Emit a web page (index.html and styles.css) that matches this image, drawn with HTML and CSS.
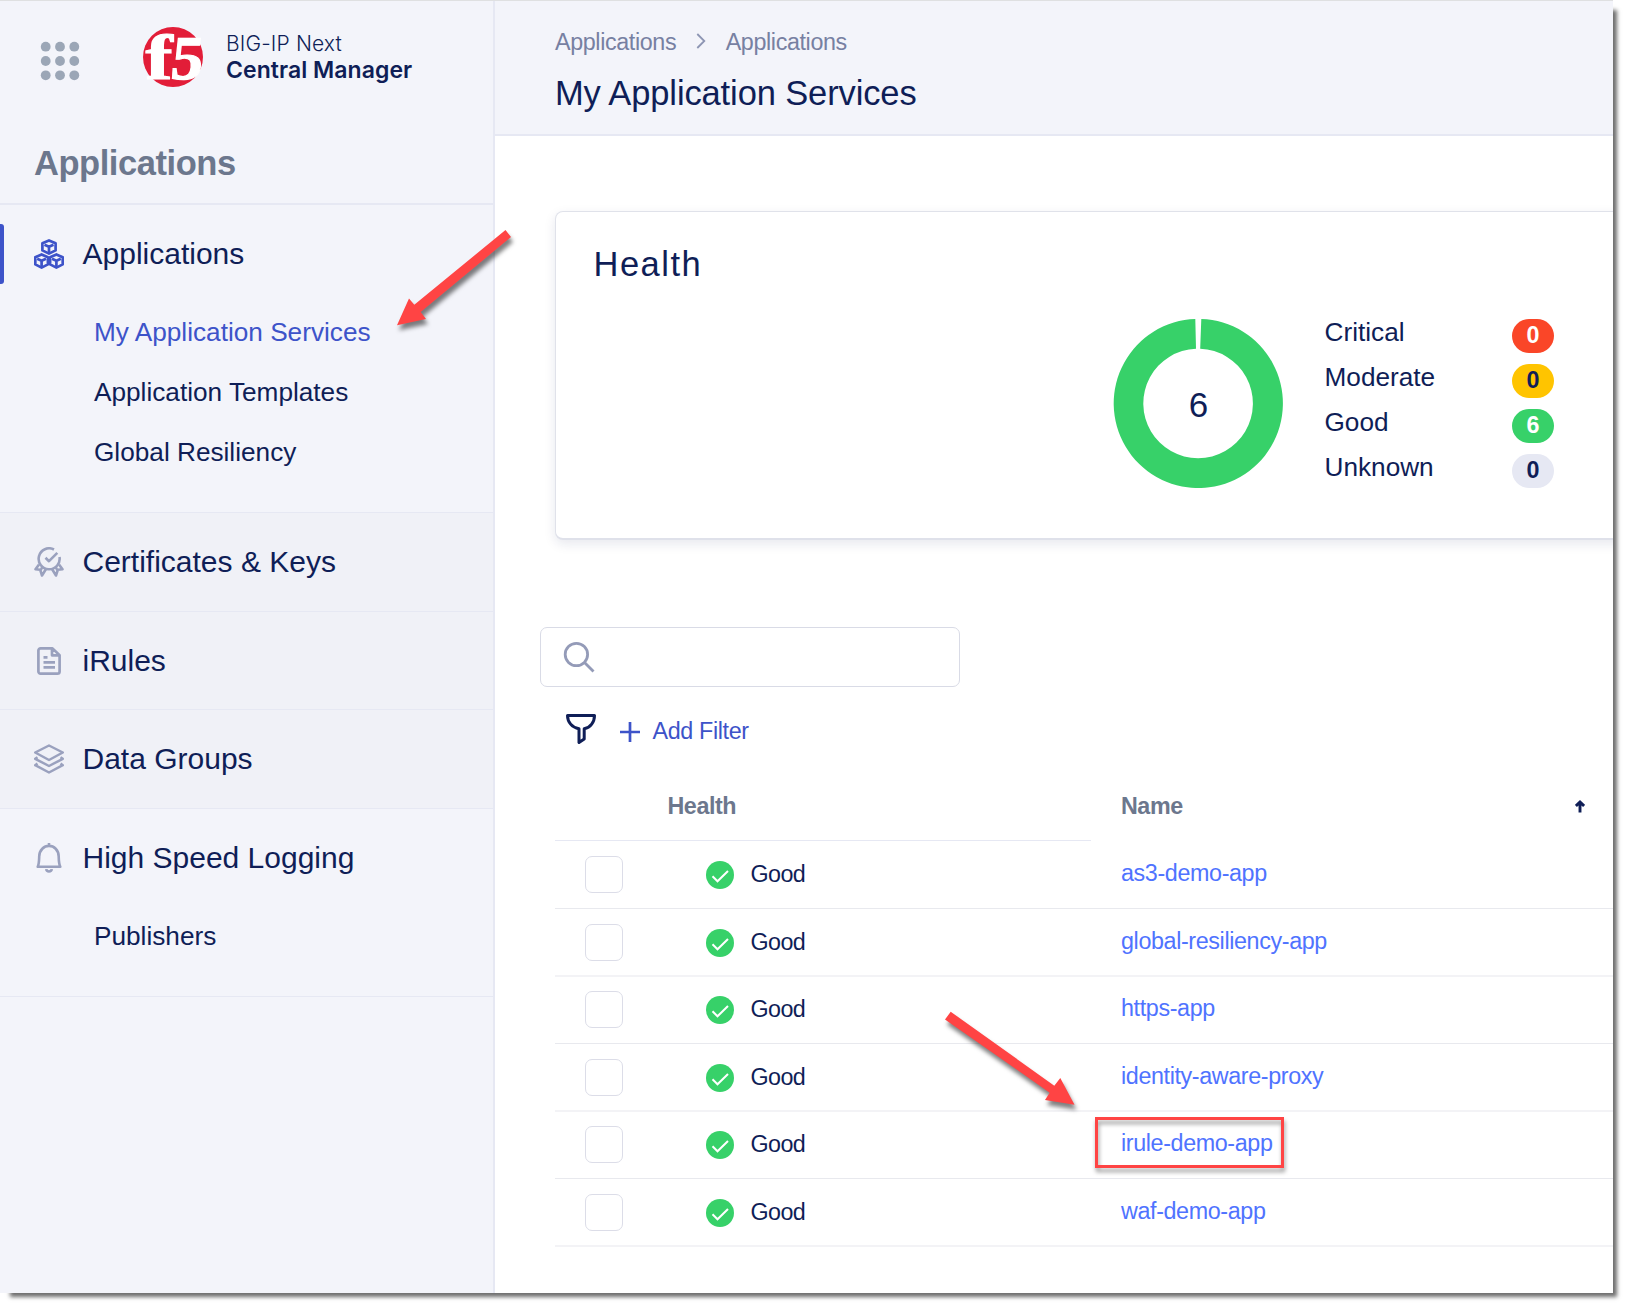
FILE: index.html
```html
<!DOCTYPE html>
<html lang="en">
<head>
<meta charset="utf-8">
<title>BIG-IP Next Central Manager</title>
<link rel="stylesheet" href="styles.css">
</head>
<body>
<div class="window">
  <aside class="sidebar">
    <div class="brand">
      <svg class="brand-dots" width="40" height="40" viewBox="0 0 40 40" fill="#9ba6b6"><circle cx="5.7" cy="5.7" r="4.9"/><circle cx="20" cy="5.7" r="4.9"/><circle cx="34.3" cy="5.7" r="4.9"/><circle cx="5.7" cy="20" r="4.9"/><circle cx="20" cy="20" r="4.9"/><circle cx="34.3" cy="20" r="4.9"/><circle cx="5.7" cy="34.3" r="4.9"/><circle cx="20" cy="34.3" r="4.9"/><circle cx="34.3" cy="34.3" r="4.9"/></svg>
      <svg class="brand-logo" width="60" height="60" viewBox="0 0 60 60">
        <circle cx="30" cy="30" r="30" fill="#e21d38"/>
        <g class="logo-letters">
          <text transform="translate(2.500 51.5) scale(1.300 1)" font-size="62.500">f</text>
          <text transform="translate(26.500 51.5) skewX(-6) scale(1.030 1)" font-size="62">5</text>
        </g>
      </svg>
      <div class="brand-name"><span class="brand-line">BIG-IP Next</span><span class="brand-line brand-strong">Central Manager</span></div>
    </div>
    <h2 class="sidebar-title">Applications</h2>
    <nav class="nav">
      <section class="nav-group open">
        <div class="nav-item active">
          <svg class="nav-icon" viewBox="0 0 30 30" stroke-width="2.7">
            <path d="M15 1.4l6.600 2.800v7.200L15 14.600l-6.600-3.200V4.200z"/><path d="M10.500 5.800L15 7.800l4.500-2M15 8v5"/>
            <path d="M7.600 15.400l6.300 2.800v7.200l-6.300 3.200-6.300-3.200v-7.200z"/><path d="M3.200 19.800l4.400 2 4.400-2M7.600 22v5"/>
            <path d="M22.400 15.400l6.300 2.800v7.200l-6.300 3.200-6.300-3.200v-7.200z"/><path d="M18 19.800l4.400 2 4.400-2M22.400 22v5"/>
          </svg>
          <span>Applications</span>
        </div>
        <ul class="nav-children">
          <li class="current">My Application Services</li>
          <li>Application Templates</li>
          <li>Global Resiliency</li>
        </ul>
      </section>
      <section class="nav-group">
        <div class="nav-item">
          <svg class="nav-icon" viewBox="0 0 30 30" stroke-width="2.6"><path d="M20 2.500A10.500 10.500 0 1 0 25.500 10"/><path d="M11.500 10.800l3.500 3.400 8.300-8.400"/><path d="M5 17.500L1.500 22.300l4.700.5L8 28.500l4-6.500M25 17.500l3.500 4.800-4.700.5L22 28.500 18 22M8.300 20l-1.500 3M21.700 20l1.500 3"/></svg>
          <span>Certificates &amp; Keys</span>
        </div>
      </section>
      <section class="nav-group short">
        <div class="nav-item">
          <svg class="nav-icon" viewBox="0 0 30 30" stroke-width="2.7"><path d="M18.500 2.400H6.600a2.200 2.200 0 0 0-2.200 2.200v20.800a2.200 2.200 0 0 0 2.200 2.200h16.800a2.200 2.200 0 0 0 2.200-2.200V9.200zM18 2.700v6.600h7.400M9.500 11.300h4M9.500 16.400h11.500M9.500 21.400h11.500"/></svg>
          <span>iRules</span>
        </div>
      </section>
      <section class="nav-group">
        <div class="nav-item">
          <svg class="nav-icon" viewBox="0 0 30 30" stroke-width="2.500"><path d="M15 1.500L28.800 8.500 15 16 1.200 8.500z"/><path d="M3.500 13.300L1.200 14.800 15 22l13.800-7.200-2.300-1.500M3.500 19.600L1.200 21.200 15 28.500l13.800-7.300-2.300-1.600"/></svg>
          <span>Data Groups</span>
        </div>
      </section>
      <section class="nav-group open">
        <div class="nav-item">
          <svg class="nav-icon" viewBox="0 0 30 30" stroke-width="2.600"><path d="M15 0v2.500M3.700 23.800h22.600c-1.500-3-1.500-6.300-1.600-10.300C24.600 7 20 2.900 15 2.900S5.400 7 5.200 13.500C5.100 17.500 5.100 20.800 3.700 23.800z"/><path d="M12.200 26.200c.4 3 5.200 3 5.600 0"/></svg>
          <span>High Speed Logging</span>
        </div>
        <ul class="nav-children"><li>Publishers</li></ul>
      </section>
    </nav>
  </aside>

  <main class="main">
    <header class="page-head">
      <div class="crumbs">
        <span>Applications</span>
        <svg width="10" height="16" viewBox="0 0 10 16" fill="none" stroke="#8d95b3" stroke-width="1.8"><path d="M1.300 1l7 7-7 7"/></svg>
        <span>Applications</span>
      </div>
      <h1 class="page-title">My Application Services</h1>
    </header>

    <section class="card">
      <h2 class="card-title">Health</h2>
      <div class="card-body">
        <div class="donut">
          <svg width="170" height="170" viewBox="0 0 170 170"><path fill="#37d169" d="M88.300 .9A84.600 84.600 0 1 1 82.300 .9L83 30.700A54.800 54.800 0 1 0 87.200 30.700z"/></svg>
          <span class="donut-total">6</span>
        </div>
        <ul class="legend">
          <li><span>Critical</span><b class="pill critical">0</b></li>
          <li><span>Moderate</span><b class="pill moderate">0</b></li>
          <li><span>Good</span><b class="pill good">6</b></li>
          <li><span>Unknown</span><b class="pill unknown">0</b></li>
        </ul>
      </div>
    </section>

    <div class="search">
      <svg width="32" height="32" viewBox="0 0 32 32" fill="none" stroke="#949bb8" stroke-width="2.800"><circle cx="13.400" cy="13.500" r="11.200"/><path d="M21.500 21.500l9 9"/></svg>
    </div>
    <div class="filters">
      <svg width="30" height="30" viewBox="0 0 30 30" fill="none" stroke="#0f1e57" stroke-width="3" stroke-linejoin="round"><path d="M1.500 1.500h27C28.500 8 24.500 13.500 18.200 14.800V25l-5.200 3.500V14.800C6 13.500 1.500 8 1.500 1.500z"/></svg>
      <svg class="plus" width="20" height="20" viewBox="0 0 20 20" stroke="#3d53c9" stroke-width="2.700"><path d="M0 10h20M10 0v20"/></svg>
      <span class="add-filter">Add Filter</span>
    </div>

    <div class="table">
      <div class="thead">
        <div class="th th-health">Health</div>
        <div class="th th-name"><span>Name</span>
          <svg width="10" height="13" viewBox="0 0 10 13" fill="none" stroke="#0f1e57" stroke-width="2.900"><path d="M5 12.500V2M.9 6L5 2.100 9.100 6"/></svg>
        </div>
      </div>
      <div class="row r1"><i class="box"></i><svg class="ok" viewBox="0 0 28 28"><circle cx="14" cy="14" r="14"/><path d="M6.500 15.300l5 5L22 10"/></svg><span class="state">Good</span><a class="name">as3-demo-app</a></div>
      <div class="row r2"><i class="box"></i><svg class="ok" viewBox="0 0 28 28"><circle cx="14" cy="14" r="14"/><path d="M6.500 15.300l5 5L22 10"/></svg><span class="state">Good</span><a class="name">global-resiliency-app</a></div>
      <div class="row r3"><i class="box"></i><svg class="ok" viewBox="0 0 28 28"><circle cx="14" cy="14" r="14"/><path d="M6.500 15.300l5 5L22 10"/></svg><span class="state">Good</span><a class="name">https-app</a></div>
      <div class="row r2"><i class="box"></i><svg class="ok" viewBox="0 0 28 28"><circle cx="14" cy="14" r="14"/><path d="M6.500 15.300l5 5L22 10"/></svg><span class="state">Good</span><a class="name">identity-aware-proxy</a></div>
      <div class="row r3"><i class="box"></i><svg class="ok" viewBox="0 0 28 28"><circle cx="14" cy="14" r="14"/><path d="M6.500 15.300l5 5L22 10"/></svg><span class="state">Good</span><a class="name">irule-demo-app</a></div>
      <div class="row r2"><i class="box"></i><svg class="ok" viewBox="0 0 28 28"><circle cx="14" cy="14" r="14"/><path d="M6.500 15.300l5 5L22 10"/></svg><span class="state">Good</span><a class="name">waf-demo-app</a></div>
    </div>
  </main>

  <!-- callouts drawn over the page -->
  <svg class="callouts" width="1613" height="1293" viewBox="0 0 1613 1293">
    <path d="M505.500 230L511 237 420.700 312 426 319 397 325.300 409 298.500 414.300 304.700z"/>
    <path d="M950.700 1011.700L945 1019.400 1049.700 1092.700 1045 1100 1074.500 1104.700 1060.300 1078 1054.300 1085.700z"/>
  </svg>
  <div class="marker"></div>
</div>
</body>
</html>
```
FILE: styles.css
```css
* { box-sizing: border-box; }
body {
  margin: 0;
  width: 1628px;
  height: 1308px;
  overflow: hidden;
  background: #fff;
  color: #0f1e57;
  font-family: "Liberation Sans", Arial, sans-serif;
}
h1, h2, ul { margin: 0; padding: 0; font-weight: 400; }
ul { list-style: none; }

.window {
  position: relative;
  display: flex;
  width: 1613px;
  height: 1293px;
  border-top: 1px solid #dfe0e1;
  background: #fff;
  box-shadow: 7px 7px 4px -3px rgba(0, 0, 0, .57);
}

/* sidebar */
.sidebar {
  flex: none;
  width: 495px;
  border-right: 2px solid #e6e8f3;
  background: #f3f4fa;
}
.brand { display: flex; height: 124px; padding: 26px 0 0 40px; }
.brand-dots { flex: none; margin-top: 14px; }
.brand-logo { flex: none; margin-left: 63px; overflow: visible; }
.logo-letters {
  fill: #fff;
  stroke: #fff;
  stroke-width: 1.2px;
  font-family: "Liberation Serif", serif;
  font-weight: 700;
}
.brand-name {
  display: flex;
  flex-direction: column;
  margin: 4px 0 0 23px;
  font-family: Inter, sans-serif;
}
.brand-line { height: 26px; line-height: 26px; font-size: 21px; font-weight: 350; letter-spacing: .15px; white-space: nowrap; }
.brand-strong { font-size: 23px; font-weight: 600; letter-spacing: .05px; }
.sidebar-title {
  height: 80px;
  padding-left: 34px;
  border-bottom: 2px solid #e6e8f3;
  color: #6c778d;
  font-size: 34.500px;
  font-weight: 700;
  letter-spacing: -.450px;
  line-height: 77px;
}
.nav-group { border-bottom: 1px solid #e6e8f3; background: #f0f1f7; }
.nav-group.open { padding-bottom: 30px; background: #f3f4fa; }
.nav-item { position: relative; display: flex; align-items: center; gap: 18.500px; height: 98px; padding-left: 34px; font-size: 30px; }
.open .nav-item, .short .nav-item { height: 97px; }
.nav-icon { width: 30px; height: 30px; fill: none; stroke: #9aa1be; stroke-linejoin: round; }
.active .nav-icon { stroke: #3d53c9; }
.active::before {
  content: "";
  position: absolute;
  left: 0;
  top: 19px;
  width: 4px;
  height: 60px;
  border-radius: 0 3px 3px 0;
  background: #3d53c9;
}
.nav-children li { height: 60px; padding-left: 94px; font-size: 26.200px; line-height: 60px; }
.nav-children .current { color: #3d53c9; }

/* page head */
.main { flex: 1; min-width: 0; overflow: hidden; }
.page-head {
  height: 135px;
  padding: 22px 0 0 60px;
  border-bottom: 2px solid #e6e8f3;
  background: #f3f4fa;
}
.crumbs { display: flex; align-items: center; height: 38px; color: #7780a2; font-size: 23.300px; letter-spacing: -.370px; }
.crumbs svg { margin: 0 19.500px 2px 20px; }
.page-title { height: 66px; font-size: 34.500px; letter-spacing: -.120px; line-height: 64px; }

/* health card */
.card {
  width: 1200px;
  height: 329px;
  margin: 75px 0 0 60px;
  padding: 22px 0 0 37px;
  border: 1px solid #e0e2ea;
  border-bottom: 2px solid #dfe1ea;
  border-radius: 8px;
  background: #fff;
  box-shadow: 0 4px 12px rgba(15, 30, 87, .1);
}
.card-title { height: 60px; padding-left: .500px; font-size: 34.500px; line-height: 61px; letter-spacing: 1.500px; }
.card-body { display: flex; padding: 24px 0 0 520px; }
.donut { display: grid; width: 170px; height: 170px; }
.donut > * { grid-area: 1 / 1; }
.donut-total { place-self: center; padding: 3px 0 0 1px; font-size: 35px; }
.legend { width: 229.500px; margin: 0 0 0 41.500px; }
.legend li { display: flex; align-items: flex-start; justify-content: space-between; height: 45px; font-size: 26.200px; line-height: 28px; }
.pill { width: 42px; height: 34px; margin-top: 1px; border-radius: 17px; font-size: 23.300px; line-height: 32px; text-align: center; }
.critical { background: #fa4628; color: #fff; }
.moderate { background: #ffc400; }
.good { background: #37d169; color: #fff; }
.unknown { background: #e6e8f3; }

/* search and filters */
.search {
  width: 420px;
  height: 60px;
  margin: 87px 0 0 45px;
  padding: 13px 0 0 22px;
  border: 1px solid #d9dbe6;
  border-radius: 7px;
}
.filters { display: flex; height: 30px; margin: 27px 0 0 71px; }
.plus { margin: 8px 12.500px 0 24px; }
.add-filter { color: #3d53c9; font-size: 23.300px; letter-spacing: -.350px; line-height: 34px; }

/* table */
.table { margin: 29px 0 0 60px; color: #0f1e57; }
.thead { display: flex; height: 68px; }
.th { height: 68px; color: #6c778d; font-size: 23.300px; font-weight: 700; letter-spacing: -.450px; line-height: 66px; }
.th-health { width: 536px; padding-left: 112.500px; border-bottom: 1px solid #e6e8f3; }
.th-name { display: flex; flex: 1; align-items: center; justify-content: space-between; height: 66px; padding: 0 28px 0 30px; }
.row {
  display: grid;
  grid-template-columns: 121px 44.500px 370.500px 1fr;
  align-items: center;
  height: 68px;
  padding-left: 30px;
  border-bottom: 1px solid #e8e9ee;
}
.r2 { border-bottom: 2px solid #f3f3f6; }
.r3 { height: 67px; padding-bottom: 1px; }
.box { width: 38px; height: 37px; border: 1px solid #dcdde8; border-radius: 7px; }
.ok { width: 28px; height: 28px; margin-top: 1px; }
.ok circle { fill: #37d169; }
.ok path { fill: none; stroke: #fff; stroke-width: 2; }
.state { font-size: 23.300px; letter-spacing: -.600px; }
.name { color: #4f73ff; font-size: 23.300px; letter-spacing: -.370px; }
.row .name { padding-bottom: 2px; }

/* callouts */
.callouts { position: absolute; left: 0; top: -1px; fill: #ff4444; filter: drop-shadow(2px 5px 2px rgba(0, 0, 0, .5)); }
.marker {
  position: absolute;
  left: 1095px;
  top: 1116px;
  width: 189px;
  height: 51px;
  border: 3px solid #ff4444;
  filter: drop-shadow(1px 4px 2px rgba(0, 0, 0, .4));
}
```
